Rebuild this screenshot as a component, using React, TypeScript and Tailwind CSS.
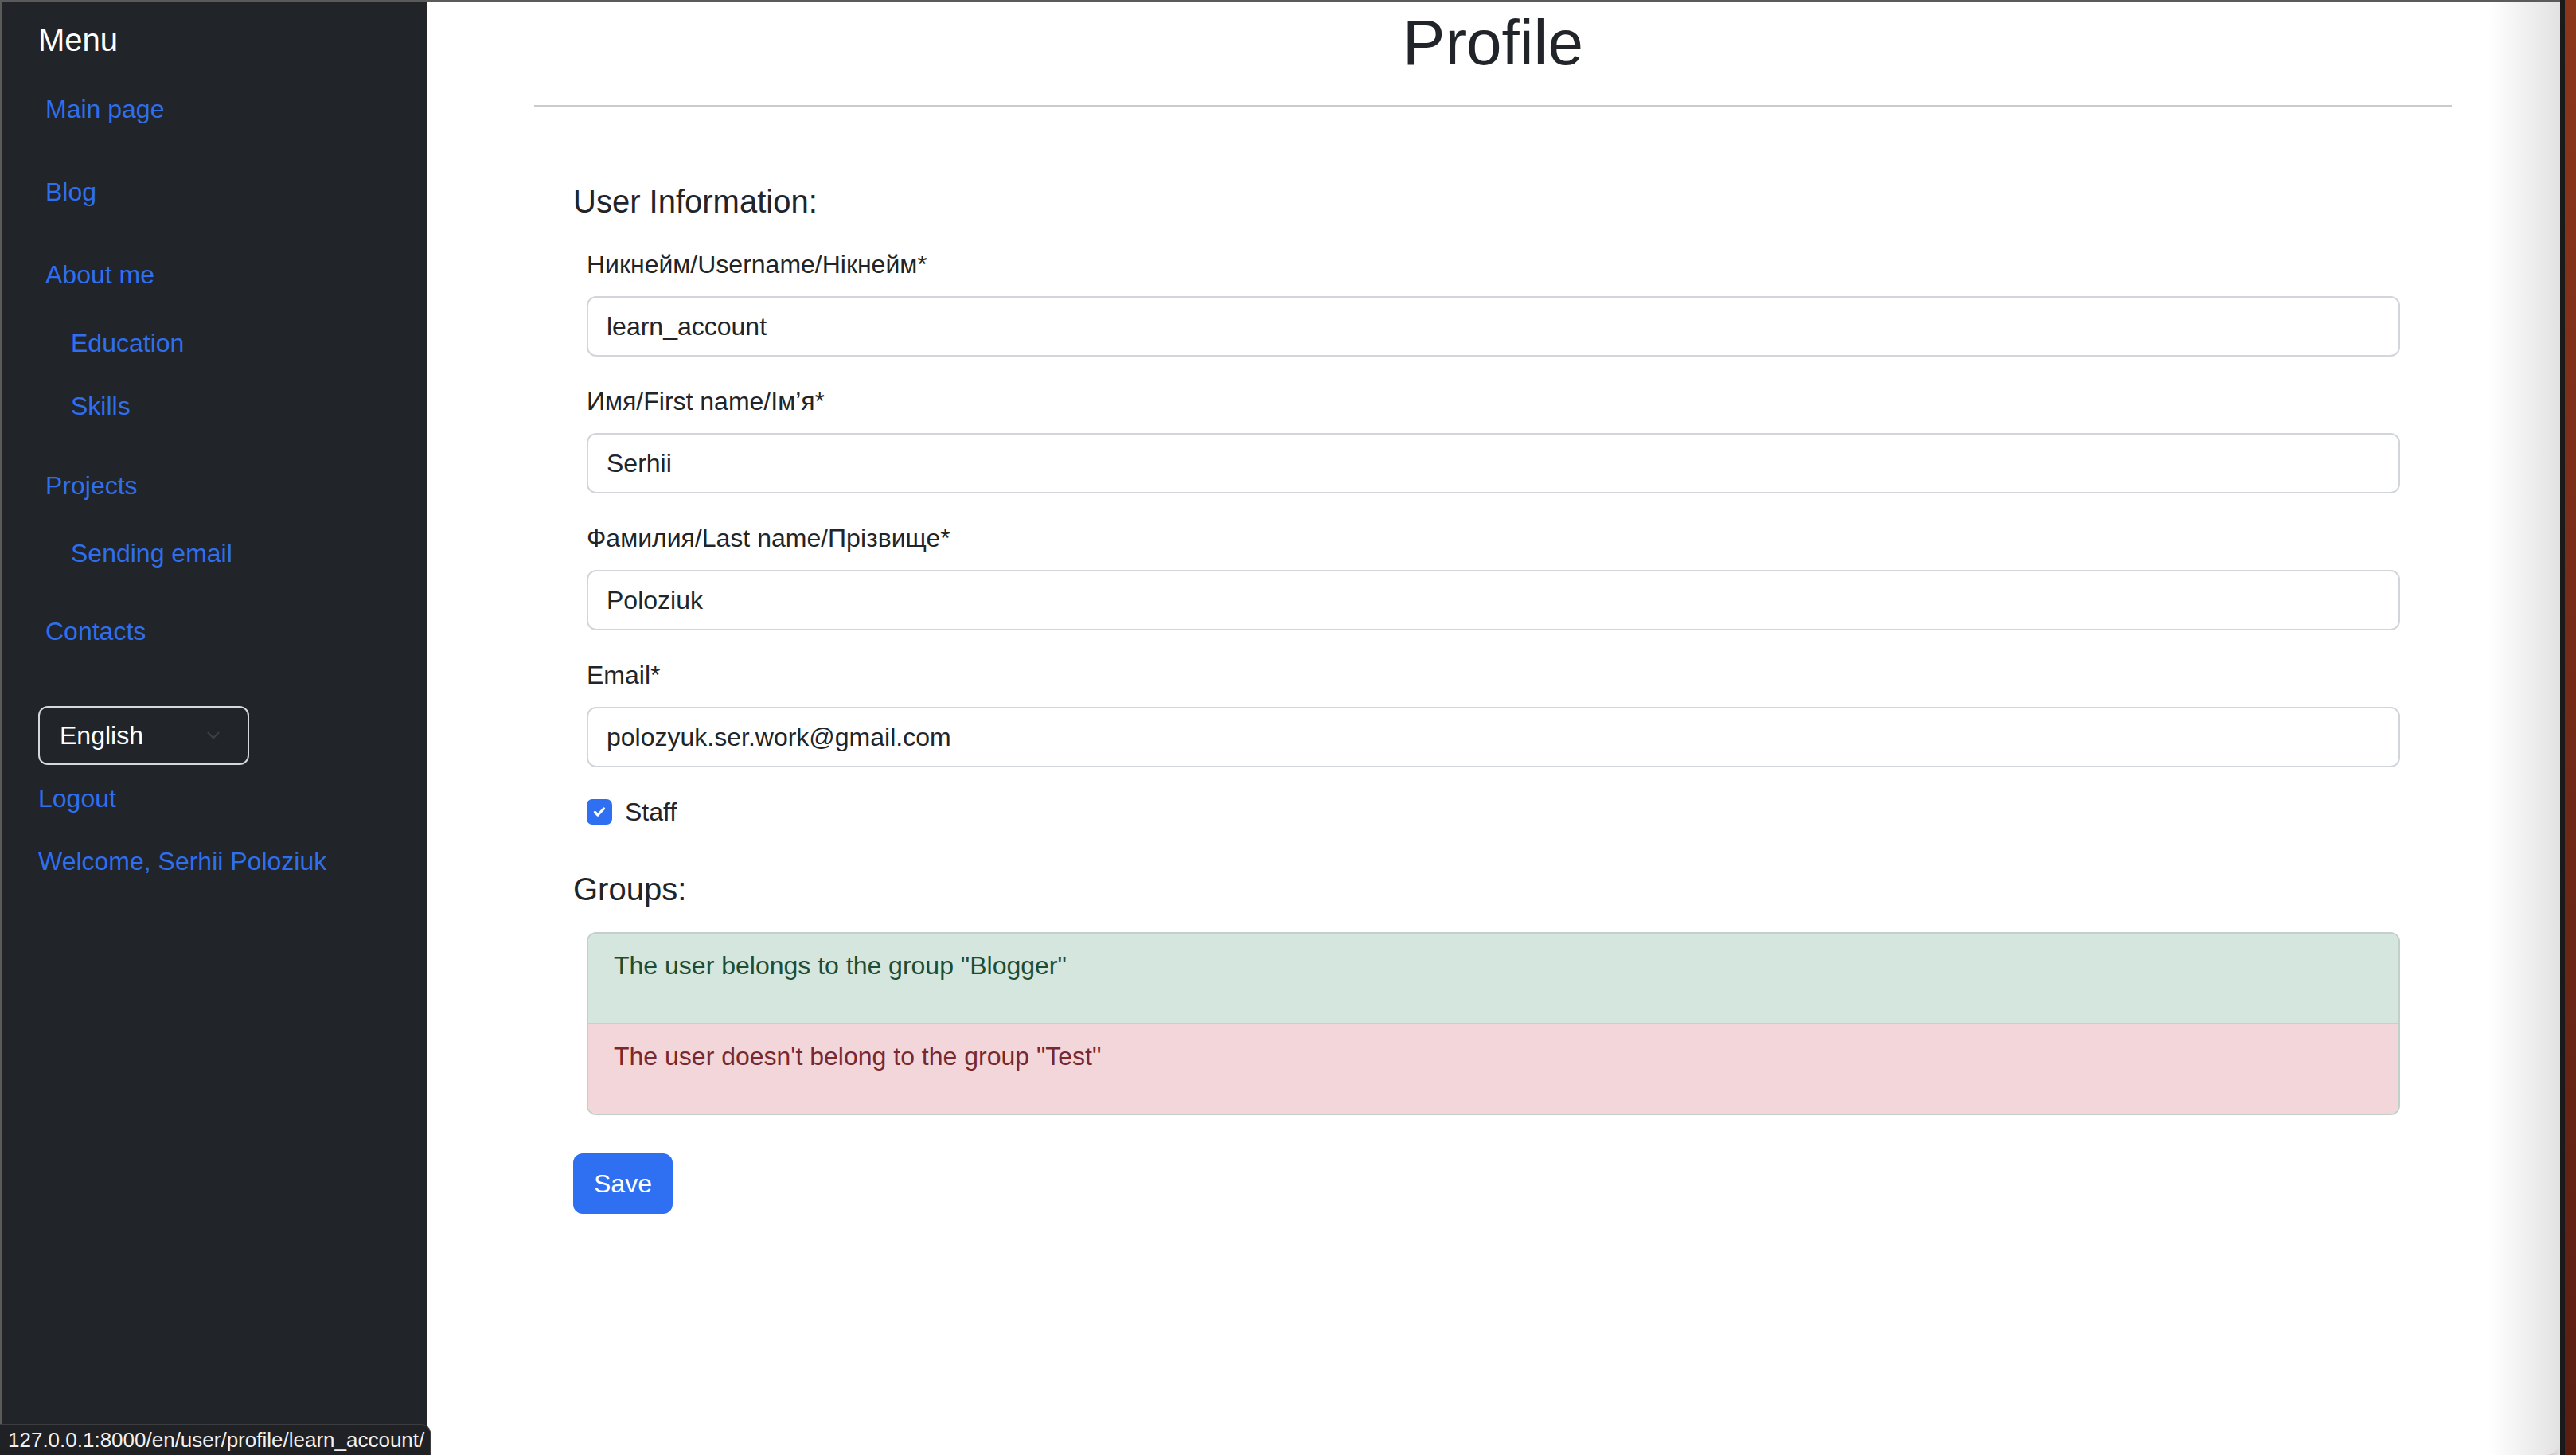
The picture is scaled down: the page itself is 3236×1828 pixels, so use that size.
import { ChevronDown } from "lucide-react";

type NavItem = {
  label: string;
  cls: string;
};

// margins are measured from the screenshot, so the spacing isn't uniform
const NAV_ITEMS: NavItem[] = [
  { label: "Main page", cls: "mt-[39px] ml-[9px]" },
  { label: "Blog", cls: "mt-[56px] ml-[9px]" },
  { label: "About me", cls: "mt-[56px] ml-[9px]" },
  { label: "Education", cls: "mt-[38px] ml-[41px]" },
  { label: "Skills", cls: "mt-[31px] ml-[41px]" },
  { label: "Projects", cls: "mt-[52px] ml-[9px]" },
  { label: "Sending email", cls: "mt-[37px] ml-[41px]" },
  { label: "Contacts", cls: "mt-[50px] ml-[9px]" },
];

const FIELDS = [
  { label: "Никнейм/Username/Нікнейм*", value: "learn_account" },
  { label: "Имя/First name/Ім’я*", value: "Serhii" },
  { label: "Фамилия/Last name/Прізвище*", value: "Poloziuk" },
  { label: "Email*", value: "polozyuk.ser.work@gmail.com" },
];

function Sidebar() {
  return (
    <aside className="w-[537px] shrink-0 border-l-2 border-[#5b5b5b] bg-[#212428] pl-[46px] pt-[24px]">
      <div className="text-[40px] leading-[48px] text-white">Menu</div>
      <nav className="flex flex-col items-start">
        {NAV_ITEMS.map((item) => (
          <a
            key={item.label}
            href="#"
            className={`text-[32px] leading-[48px] text-[#2f6fee] ${item.cls}`}
          >
            {item.label}
          </a>
        ))}
      </nav>
      <div className="mt-[70px] flex h-[74px] w-[265px] items-center justify-between rounded-[12px] border-2 border-[#d6d8db] pl-[25px] pr-[30px]">
        <span className="text-[32px] leading-[48px] text-white">English</span>
        <ChevronDown className="h-[26px] w-[26px] text-[#3d4147]" strokeWidth={2} />
      </div>
      <a href="#" className="mt-[18px] block text-[32px] leading-[48px] text-[#2f6fee]">
        Logout
      </a>
      <a href="#" className="mt-[31px] block text-[32px] leading-[48px] text-[#2f6fee]">
        Welcome, Serhii Poloziuk
      </a>
    </aside>
  );
}

function ProfileForm() {
  return (
    <form className="px-[49px]" onSubmit={(e) => e.preventDefault()}>
      <h5 className="mt-[95px] text-[40px] leading-[48px]">User Information:</h5>
      <div className="mt-[31px] pl-[17px] pr-[16px]">
        {FIELDS.map((f) => (
          <div key={f.label} className="mb-[32px]">
            <label className="block text-[32px] leading-[48px]">{f.label}</label>
            <input
              type="text"
              defaultValue={f.value}
              className="mt-[16px] block h-[76px] w-full rounded-[12px] border-2 border-[#d2d5d9] bg-white px-[23px] text-[32px] text-[#212529] outline-none"
            />
          </div>
        ))}
        <div className="mt-[1px] flex items-center gap-[16px]">
          <span className="flex h-[32px] w-[32px] items-center justify-center rounded-[7px] bg-[#2f70f2]">
            <svg width="20" height="20" viewBox="0 0 20 20" fill="none">
              <path
                d="M4.5 10.5l3.5 3.5 7.5-8"
                stroke="white"
                strokeWidth="3.2"
                strokeLinecap="round"
                strokeLinejoin="round"
              />
            </svg>
          </span>
          <span className="text-[32px] leading-[48px]">Staff</span>
        </div>
      </div>

      <h5 className="mt-[49px] text-[40px] leading-[48px]">Groups:</h5>
      <div className="ml-[17px] mr-[16px] mt-[30px] overflow-hidden rounded-[12px] border-2 border-[#c3cfc9]">
        <div className="bg-[#d4e6dd] px-[32px] py-[16px] text-[#1d4d34]">
          <p className="mb-[32px] text-[32px] leading-[48px]">The user belongs to the group "Blogger"</p>
        </div>
        <div className="border-t-2 border-[#c4d2cb] bg-[#f2d6d9] px-[32px] py-[16px] text-[#7a2830]">
          <p className="mb-[32px] text-[32px] leading-[48px]">The user doesn't belong to the group "Test"</p>
        </div>
      </div>

      <button
        type="submit"
        className="mt-[48px] h-[76px] rounded-[12px] bg-[#2f70f2] px-[26px] text-[32px] leading-[48px] text-white"
      >
        Save
      </button>
    </form>
  );
}

export default function App() {
  return (
    <div className="relative flex h-[1828px] w-[3236px] overflow-hidden bg-[#7f3019] font-['Liberation_Sans',Arial,sans-serif] text-[#212529]">
      <div className="flex flex-1 rounded-br-[18px] border-t-2 border-[#5b5b5b] bg-white">
        <Sidebar />
        <main className="relative flex-1 pl-[134px] pr-[136px]">
          <h1 className="mt-[4px] text-center text-[80px] leading-[96px]">Profile</h1>
          <hr className="mt-[30px] border-t-2 border-[#cbcbcb]" />
          <ProfileForm />
          <div className="pointer-events-none absolute bottom-0 right-0 top-0 w-[90px] bg-linear-to-r from-transparent to-[#e2e2e2]" />
        </main>
      </div>
      <div className="w-[6px] shrink-0 bg-[#1a1a1a]" />
      <div className="w-[14px] shrink-0 bg-linear-to-b from-[#8c361b] to-[#5a1d12]" />

      {/* browser link preview in the corner */}
      <div className="absolute bottom-0 left-0 h-[39px] w-[541px] rounded-tr-[12px] border-r border-t border-[#3b3d41] bg-[#202124] pl-[10px] text-[26px] leading-[39px] text-[#f1f1f1]">
        127.0.0.1:8000/en/user/profile/learn_account/
      </div>
    </div>
  );
}
